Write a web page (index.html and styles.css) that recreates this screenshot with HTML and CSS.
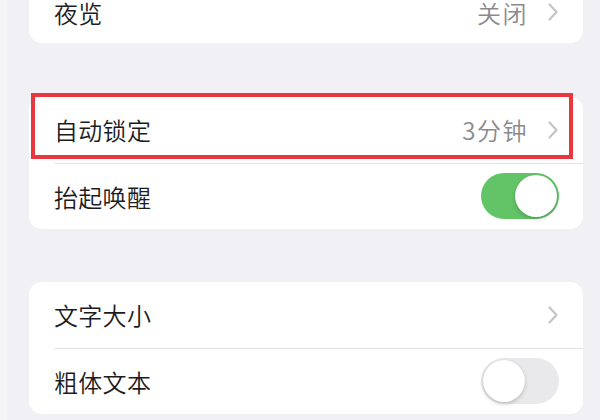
FILE: index.html
```html
<!DOCTYPE html>
<html lang="zh-CN">
<head>
<meta charset="utf-8">
<link rel="stylesheet" href="styles.css">
</head>
<body>
<div class="page">
  <div class="card card-first">
    <div class="row row-short">
      <span class="label">夜览</span>
      <span class="right"><span class="value">关闭</span><svg class="chev" viewBox="0 0 10 18"><polyline points="1.5,1.5 8.5,9 1.5,16.5"/></svg></span>
    </div>
  </div>

  <div class="card">
    <div class="row">
      <span class="label">自动锁定</span>
      <span class="right"><span class="value">3分钟</span><svg class="chev" viewBox="0 0 10 18"><polyline points="1.5,1.5 8.5,9 1.5,16.5"/></svg></span>
      <div class="highlight"></div>
    </div>
    <div class="sep"></div>
    <div class="row">
      <span class="label">抬起唤醒</span>
      <span class="toggle on"><span class="knob"></span></span>
    </div>
  </div>

  <div class="card">
    <div class="row">
      <span class="label">文字大小</span>
      <span class="right"><svg class="chev" viewBox="0 0 10 18"><polyline points="1.5,1.5 8.5,9 1.5,16.5"/></svg></span>
    </div>
    <div class="sep"></div>
    <div class="row">
      <span class="label">粗体文本</span>
      <span class="toggle off"><span class="knob"></span></span>
    </div>
  </div>
</div>
</body>
</html>
```

FILE: styles.css
```css
html, body {
  margin: 0;
  padding: 0;
}
body {
  width: 600px;
  height: 420px;
  overflow: hidden;
  background: linear-gradient(to right, #f5f5f7 0, #f5f5f7 7px, #f0f0f5 7px);
  font-family: "Noto Sans CJK SC", "Noto Sans", sans-serif;
}
.page {
  display: flex;
  flex-direction: column;
  gap: 54px;
  margin-left: 29px;
  width: 554px;
}
.card {
  background: #ffffff;
  border-radius: 13px;
  display: flex;
  flex-direction: column;
}
.card-first {
  margin-top: -19px;
}
.card + .card + .card {
  margin-top: -1px;
}
.row {
  position: relative;
  height: 65.5px;
  display: flex;
  align-items: center;
  justify-content: space-between;
  padding: 0 24px 0 25px;
}
.row-short {
  height: 62px;
}
.label {
  font-size: 24px;
  font-weight: 350;
  color: #1c1c1e;
  letter-spacing: 0.3px;
}
.right {
  display: flex;
  align-items: center;
  gap: 20px;
}
.value {
  font-size: 24px;
  font-weight: 350;
  color: #8a8a8e;
  letter-spacing: 1.5px;
}
.chev {
  width: 10px;
  height: 18px;
  margin-right: 1px;
}
.chev polyline {
  fill: none;
  stroke: #c4c4c7;
  stroke-width: 2.2;
  stroke-linecap: round;
  stroke-linejoin: round;
}
.sep {
  height: 1px;
  background: #e3e3e6;
  margin-left: 25px;
}
.toggle {
  width: 78px;
  height: 46px;
  border-radius: 23px;
  display: flex;
  align-items: center;
  padding: 2px;
  box-sizing: border-box;
}
.toggle.on {
  background: #62c466;
  justify-content: flex-end;
}
.toggle.off {
  background: #e9e9eb;
  justify-content: flex-start;
}
.knob {
  width: 42px;
  height: 42px;
  border-radius: 50%;
  background: #ffffff;
  box-shadow: 0 2px 4px rgba(0, 0, 0, 0.18), 0 0 1px rgba(0, 0, 0, 0.12);
}
.highlight {
  position: absolute;
  left: 2px;
  top: -4px;
  width: 542px;
  height: 66px;
  box-sizing: border-box;
  border: 4px solid #e8383d;
  pointer-events: none;
}
```
